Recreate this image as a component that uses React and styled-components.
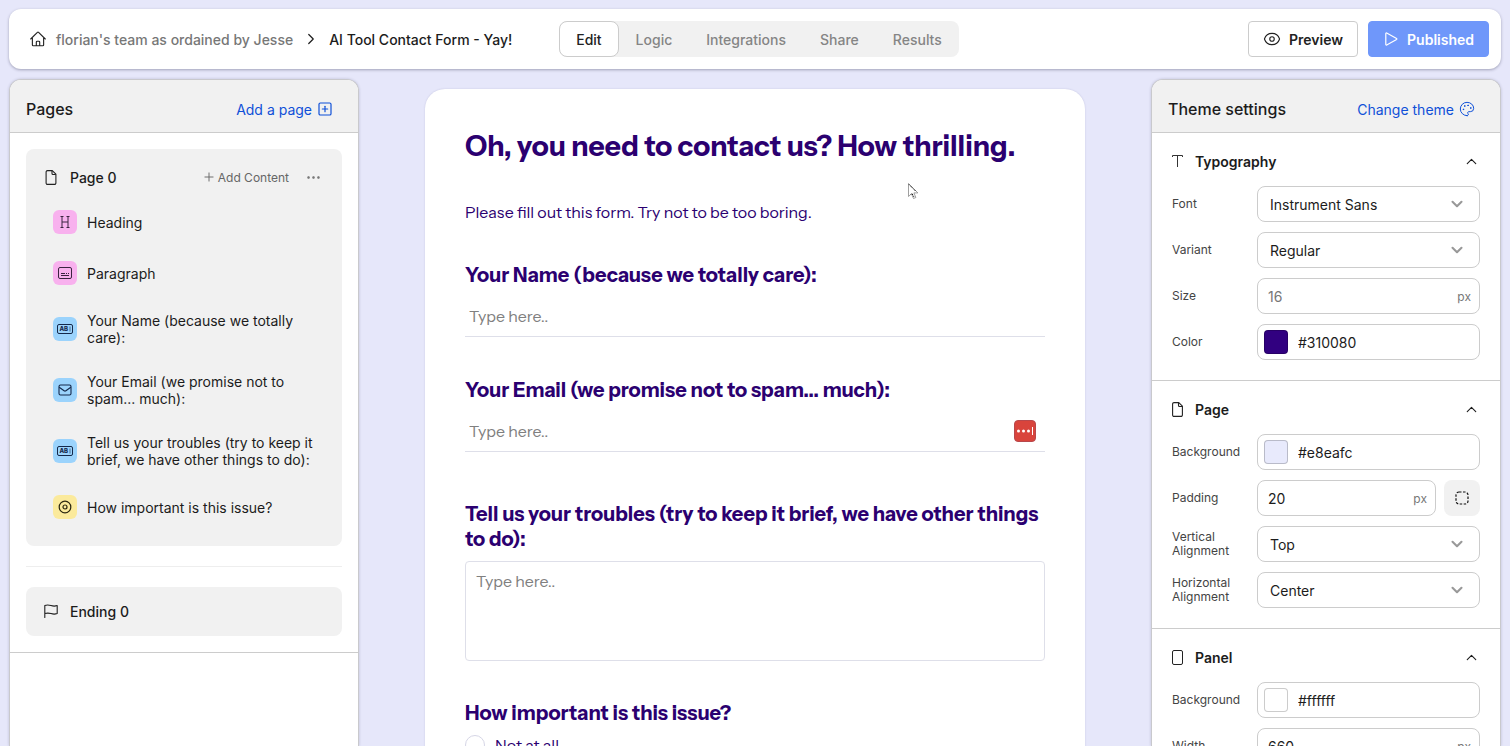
import React from "react";
import styled, { createGlobalStyle } from "styled-components";
import { HiOutlineHome, HiOutlineEye } from "react-icons/hi2";
import { ChevronUp, ChevronDown, ChevronRight, Palette, SquarePlus, Ellipsis, Plus } from "lucide-react";

const GlobalStyle = createGlobalStyle`
  *, *::before, *::after { box-sizing: border-box; }
  body {
    margin: 0;
    background: #e6e7fa;
    color: #1c1c1c;
    font-family: Inter, "Liberation Sans", sans-serif;
    font-size: 14px;
  }
  h1, h2, h3, p, ul { margin: 0; padding: 0; }
  button, input, select, textarea { font: inherit; color: inherit; margin: 0; }
  button { cursor: pointer; }
  svg { display: block; flex: none; }
`;

const Screen = styled.div`
  height: 100vh;
  padding: 9px 9px 0;
  display: flex;
  flex-direction: column;
  gap: 10px;
  overflow: hidden;
`;

/* Top bar */

const TopBar = styled.header`
  flex: none;
  display: grid;
  grid-template-columns: 1fr auto 1fr;
  align-items: center;
  padding: 12px 12px 12px 20px;
  background: #fff;
  border-radius: 12px;
  box-shadow: 0 1px 3px rgba(30, 30, 60, 0.35);
`;

const Breadcrumb = styled.nav`
  display: flex;
  align-items: center;
  gap: 9px;
  font-weight: 500;
  white-space: nowrap;
`;

const CrumbLink = styled.a`
  display: flex;
  align-items: center;
  gap: 9px;
  color: #777;
  text-decoration: none;
  svg { color: #222; }
`;

const Tabs = styled.nav`
  display: flex;
  background: #f1f1f1;
  border-radius: 8px;
`;

const Tab = styled.button`
  height: 36px;
  padding: 0 16px;
  border: 1px solid ${(p) => (p.$active ? "#ccc" : "transparent")};
  border-radius: 8px;
  background: ${(p) => (p.$active ? "#fff" : "transparent")};
  color: ${(p) => (p.$active ? "#222" : "#858585")};
  font-weight: 500;
`;

const Actions = styled.div`
  display: flex;
  justify-content: flex-end;
  gap: 10px;
`;

const ActionButton = styled.button`
  height: 36px;
  padding: 0 14px;
  display: flex;
  align-items: center;
  gap: 8px;
  border: 1px solid ${(p) => (p.$primary ? "#6f97fa" : "#ccc")};
  border-radius: 4px;
  background: ${(p) => (p.$primary ? "#6f97fa" : "#fff")};
  color: ${(p) => (p.$primary ? "#fff" : "#222")};
  font-weight: 600;
`;

/* Side panels */

const Workspace = styled.main`
  flex: 1;
  min-height: 0;
  display: grid;
  grid-template-columns: 350px minmax(0, 1fr) 350px;
`;

const SidePanel = styled.aside`
  min-height: 0;
  overflow: hidden;
  background: #fff;
  border: 1px solid #c9c9cd;
  border-bottom: 0;
  border-radius: 12px 12px 0 0;
  box-shadow: 0 0 3px rgba(30, 30, 60, 0.2);
`;

const PanelHeader = styled.div`
  height: 53px;
  padding: 6px 25px 0 16px;
  display: flex;
  align-items: center;
  justify-content: space-between;
  background: #f1f1f1;
  border-bottom: 1px solid #ccc;
`;

const PanelTitle = styled.h2`
  font-size: 16px;
  font-weight: 500;
`;

const LinkButton = styled.button`
  display: flex;
  align-items: center;
  gap: 5px;
  padding: 0;
  border: 0;
  background: none;
  color: #0f50d8;
  font-weight: 400;
`;

const PagesBody = styled.div`
  padding: 16px;
  border-bottom: 1px solid #ccc;
`;

const PageCard = styled.section`
  padding: 16px 20px 27px 18px;
  border-radius: 8px;
  background: #f1f1f1;
`;

const EndingCard = styled.section`
  padding: 12px 18px 13px;
  border-radius: 8px;
  background: #f1f1f1;
`;

const CardHead = styled.div`
  height: 24px;
  display: flex;
  align-items: center;
`;

const CardTitle = styled.h3`
  flex: 1;
  margin-left: 12px;
  font-size: 14px;
  font-weight: 500;
`;

const SmallButton = styled.button`
  display: flex;
  align-items: center;
  gap: 2px;
  margin-left: 16px;
  padding: 0;
  border: 0;
  background: none;
  color: #666;
  font-size: 12px;
`;

const ContentList = styled.ul`
  margin-top: 21px;
  padding-left: 9px;
  display: flex;
  flex-direction: column;
  gap: 27px;
  list-style: none;
`;

const ContentItem = styled.li`
  display: flex;
  align-items: center;
  gap: 10px;
  line-height: 17px;
`;

const Badge = styled.span`
  flex: none;
  width: 24px;
  height: 24px;
  display: grid;
  place-items: center;
  border-radius: 6px;
  background: ${(p) => p.$color};
`;

const Divider = styled.hr`
  margin: 20px 0;
  border: 0;
  border-top: 1px solid #eee;
`;

/* Form preview */

const Canvas = styled.div`
  min-height: 0;
  padding: 10px 10px 0;
  overflow: hidden;
`;

const FormCard = styled.form`
  max-width: 660px;
  min-height: 100%;
  margin: 0 auto;
  padding: 40px;
  border-radius: 20px;
  background: #fff;
  box-shadow: 0 0 2px rgba(60, 60, 120, 0.2);
  color: #2b0070;
  font-family: "Instrument Sans", Inter, sans-serif;
`;

const FormTitle = styled.h1`
  font-size: 28px;
  line-height: 34px;
  font-weight: 700;
`;

const FormText = styled.p`
  margin-top: 37px;
  font-size: 16px;
  line-height: 24px;
`;

const Field = styled.div`
  margin-top: ${(p) => p.$gap}px;
`;

const FieldLabel = styled.label`
  display: block;
  margin-bottom: 9px;
  font-size: 20px;
  line-height: 25px;
  font-weight: 700;
`;

const LineBox = styled.div`
  height: 40px;
  padding: 0 9px 2px 4px;
  display: flex;
  align-items: center;
  border-bottom: 1px solid #dedfe9;
`;

const LineInput = styled.input`
  flex: 1;
  min-width: 0;
  padding: 0;
  border: 0;
  outline: 0;
  background: none;
  font-size: 16px;
  &::placeholder { color: #808080; opacity: 1; }
`;

const TextArea = styled.textarea`
  display: block;
  width: 100%;
  height: 100px;
  padding: 7px 10px;
  border: 1px solid #dedfe9;
  border-radius: 4px;
  resize: none;
  font-size: 16px;
  line-height: 24px;
  &::placeholder { color: #808080; opacity: 1; }
`;

const Choices = styled.fieldset`
  margin: 40px 0 0;
  padding: 0;
  border: 0;
`;

const Legend = styled.legend`
  margin-bottom: 9px;
  padding: 0;
  font-size: 20px;
  line-height: 25px;
  font-weight: 700;
`;

const Choice = styled.label`
  display: flex;
  align-items: center;
  gap: 10px;
  font-size: 16px;
  line-height: 20px;
`;

const Radio = styled.input`
  appearance: none;
  width: 20px;
  height: 20px;
  border: 1px solid #d6d6e6;
  border-radius: 50%;
`;

/* Theme settings */

const Settings = styled.section`
  padding: 18px 20px 20px;
  border-bottom: 1px solid #ccc;
`;

const SettingsHead = styled.button`
  width: 100%;
  height: 20px;
  margin-bottom: 15px;
  padding: 0;
  display: flex;
  align-items: center;
  border: 0;
  background: none;
  text-align: left;
  font-weight: 600;
`;

const SettingsName = styled.span`
  flex: 1;
  margin-left: 12px;
`;

const Rows = styled.div`
  display: flex;
  flex-direction: column;
  gap: 10px;
`;

const Row = styled.div`
  display: grid;
  grid-template-columns: 75px minmax(0, 1fr);
  gap: 10px;
  align-items: center;
`;

const RowLabel = styled.label`
  color: #444;
  font-size: 12px;
  line-height: 14px;
`;

const Inline = styled.div`
  display: flex;
  gap: 8px;
`;

const Box = styled.div`
  flex: 1;
  min-width: 0;
  height: 36px;
  padding: 0 8px 0 ${(p) => (p.$swatch ? 6 : 10)}px;
  display: flex;
  align-items: center;
  gap: 10px;
  border: 1px solid #ccc;
  border-radius: 8px;
`;

const BoxInput = styled.input`
  flex: 1;
  width: 100%;
  min-width: 0;
  padding: 0;
  border: 0;
  outline: 0;
  background: none;
  &::placeholder { color: #777; opacity: 1; }
`;

const Unit = styled.span`
  color: #777;
  font-size: 12px;
`;

const Swatch = styled.span`
  flex: none;
  width: 24px;
  height: 24px;
  border: 1px solid rgba(0, 0, 0, 0.2);
  border-radius: 4px;
  background: ${(p) => p.$color};
`;

const SelectBox = styled.div`
  display: grid;
  align-items: center;
  svg {
    grid-area: 1 / 1;
    justify-self: end;
    margin-right: 14px;
    color: #999;
    pointer-events: none;
  }
`;

const Select = styled.select`
  grid-area: 1 / 1;
  width: 100%;
  height: 36px;
  padding: 0 36px 0 12px;
  appearance: none;
  border: 1px solid #ccc;
  border-radius: 8px;
  background: #fff;
`;

const SquareButton = styled.button`
  flex: none;
  width: 36px;
  height: 36px;
  padding: 0;
  display: grid;
  place-items: center;
  border: 0;
  border-radius: 8px;
  background: #f1f1f1;
`;

const Pointer = styled.svg`
  position: fixed;
  left: 907px;
  top: 182px;
  pointer-events: none;
`;

/* Drawings */

const PlayIcon = () => (
  <svg width="16" height="16" viewBox="0 0 16 16" fill="none" stroke="currentColor" strokeWidth="1.2" strokeLinejoin="round">
    <path d="M2.8 2.5v11a.6.6 0 0 0 .9.5l9.900-5.500a.6.6 0 0 0 0-1L3.700 2a.6.6 0 0 0-.9.5z" />
  </svg>
);

const FileIcon = ({ width = 11 }) => (
  <svg width={width} height="15" viewBox="0 0 11 15" fill="none" stroke="#222" strokeWidth="1.1" strokeLinejoin="round">
    <path d="M2 .6h4.800L10.400 4.200V13a1.400 1.400 0 0 1-1.400 1.400H2A1.400 1.400 0 0 1 .6 13V2A1.400 1.400 0 0 1 2 .6z" />
    <path d="M6.500.8v2.700a1 1 0 0 0 1 1h2.800" />
  </svg>
);

const FlagIcon = () => (
  <svg width="14" height="14" viewBox="0 0 14 14" fill="none" stroke="#222" strokeWidth="1.1" strokeLinecap="round" strokeLinejoin="round">
    <path d="M.8 13.400V1.600c2-.9 4-.7 6.200 0s4.200.7 6.200 0v8c-2 .7-4 .7-6.200 0s-4.200-.7-6.200 0" />
  </svg>
);

const HeadingIcon = () => (
  <svg width="16" height="16" viewBox="0 0 16 16" fill="none" stroke="#3a2440">
    <path d="M5 3v10M11 3v10M5 8h6M3.500 2.500h3M9.500 2.500h3M3.500 13.500h3M9.500 13.500h3" />
  </svg>
);

const ParagraphIcon = () => (
  <svg width="16" height="16" viewBox="0 0 16 16" fill="none" stroke="#3a2440">
    <rect x="1.500" y="2.500" width="13" height="11" rx="1.500" />
    <path d="M4 8.500h4M9 8.500h1M11 8.500h1M4 10.500h8" />
  </svg>
);

const ShortTextIcon = () => (
  <svg width="16" height="16" viewBox="0 0 16 16" fill="none" stroke="#14284a">
    <rect x=".5" y="3.500" width="15" height="9" rx="1.500" />
    <path d="M13 5.500v5" strokeWidth=".6" />
    <text x="2.500" y="10.200" fill="#14284a" stroke="none" fontSize="6" fontWeight="800" fontFamily="Inter, sans-serif">AB</text>
  </svg>
);

const MailIcon = () => (
  <svg width="14" height="14" viewBox="0 0 14 14" fill="none" stroke="#14284a" strokeWidth="1.1" strokeLinejoin="round">
    <rect x="1" y="2" width="12" height="10" rx="1.500" />
    <path d="M1.200 4.200l4.900 3.600a1.500 1.500 0 0 0 1.800 0l4.900-3.600" />
  </svg>
);

const ChoiceIcon = () => (
  <svg width="14" height="14" viewBox="0 0 14 14" fill="none" stroke="#2b2710" strokeWidth="1.2">
    <circle cx="7" cy="7" r="5.800" />
    <circle cx="7" cy="7" r="2" />
  </svg>
);

const TypeIcon = () => (
  <svg width="11" height="14" viewBox="0 0 11 14" fill="none" stroke="#333">
    <path d="M.5 3V1.500h10V3M5.500 1.500V13" />
  </svg>
);

const PanelIcon = () => (
  <svg width="11" height="15" viewBox="0 0 11 15" fill="none" stroke="#222">
    <rect x=".5" y=".5" width="10" height="14" rx="1.500" />
  </svg>
);

const DashedIcon = () => (
  <svg width="14" height="14" viewBox="0 0 14 14" fill="none" stroke="#111" strokeWidth="1.2">
    <rect x="1" y="1" width="12" height="12" rx="3" strokeDasharray="2.500 1.500" />
  </svg>
);

const PasswordIcon = () => (
  <svg width="22" height="22" viewBox="0 0 22 22">
    <rect x=".5" y=".5" width="21" height="21" rx="3.500" fill="#d9443c" stroke="#b7484c" />
    <g fill="#fff">
      <circle cx="4.500" cy="11" r="1.500" />
      <circle cx="9.500" cy="11" r="1.500" />
      <circle cx="14.500" cy="11" r="1.500" />
      <path d="M18 7h1v8h-1z" />
    </g>
  </svg>
);

/* Data and composition */

const tabs = ["Edit", "Logic", "Integrations", "Share", "Results"];

const contents = [
  ["Heading", "#f8b1ee", <HeadingIcon />],
  ["Paragraph", "#f8b1ee", <ParagraphIcon />],
  ["Your Name (because we totally care):", "#9bd3fc", <ShortTextIcon />],
  ["Your Email (we promise not to spam... much):", "#9bd3fc", <MailIcon />],
  ["Tell us your troubles (try to keep it brief, we have other things to do):", "#9bd3fc", <ShortTextIcon />],
  ["How important is this issue?", "#fbea9c", <ChoiceIcon />],
];

function SelectRow({ id, label, value }) {
  return (
    <Row>
      <RowLabel htmlFor={id}>{label}</RowLabel>
      <SelectBox>
        <Select id={id} defaultValue={value}>
          <option>{value}</option>
        </Select>
        <ChevronDown size={18} strokeWidth={2.8} />
      </SelectBox>
    </Row>
  );
}

function ColorRow({ id, label, value }) {
  return (
    <Row>
      <RowLabel htmlFor={id}>{label}</RowLabel>
      <Box $swatch>
        <Swatch $color={value} />
        <BoxInput id={id} defaultValue={value} />
      </Box>
    </Row>
  );
}

function SizeRow({ id, label, value, placeholder, children }) {
  return (
    <Row>
      <RowLabel htmlFor={id}>{label}</RowLabel>
      <Inline>
        <Box>
          <BoxInput id={id} defaultValue={value} placeholder={placeholder} />
          <Unit>px</Unit>
        </Box>
        {children}
      </Inline>
    </Row>
  );
}

function SettingsGroup({ icon, name, children }) {
  return (
    <Settings>
      <SettingsHead type="button" aria-expanded="true">
        {icon}
        <SettingsName>{name}</SettingsName>
        <ChevronUp size={17} strokeWidth={1.6} />
      </SettingsHead>
      <Rows>{children}</Rows>
    </Settings>
  );
}

export default function App() {
  return (
    <>
      <GlobalStyle />
      <Screen>
        <TopBar>
          <Breadcrumb aria-label="Breadcrumb">
            <CrumbLink href="#team">
              <HiOutlineHome size={18} />
              florian's team as ordained by Jesse
            </CrumbLink>
            <ChevronRight size={18} strokeWidth={1.6} />
            <span>AI Tool Contact Form - Yay!</span>
          </Breadcrumb>
          <Tabs aria-label="Form sections">
            {tabs.map((t, i) => (
              <Tab key={t} type="button" $active={i === 0}>{t}</Tab>
            ))}
          </Tabs>
          <Actions>
            <ActionButton type="button"><HiOutlineEye size={18} />Preview</ActionButton>
            <ActionButton type="button" $primary><PlayIcon />Published</ActionButton>
          </Actions>
        </TopBar>

        <Workspace>
          <SidePanel>
            <PanelHeader>
              <PanelTitle>Pages</PanelTitle>
              <LinkButton type="button">Add a page <SquarePlus size={16} strokeWidth={1.8} /></LinkButton>
            </PanelHeader>
            <PagesBody>
              <PageCard>
                <CardHead>
                  <FileIcon width={14} />
                  <CardTitle>Page 0</CardTitle>
                  <SmallButton type="button"><Plus size={14} strokeWidth={1.6} />Add Content</SmallButton>
                  <SmallButton type="button" aria-label="More"><Ellipsis size={17} strokeWidth={1.5} /></SmallButton>
                </CardHead>
                <ContentList>
                  {contents.map(([label, color, icon]) => (
                    <ContentItem key={label}>
                      <Badge $color={color}>{icon}</Badge>
                      <span>{label}</span>
                    </ContentItem>
                  ))}
                </ContentList>
              </PageCard>
              <Divider />
              <EndingCard>
                <CardHead>
                  <FlagIcon />
                  <CardTitle>Ending 0</CardTitle>
                </CardHead>
              </EndingCard>
            </PagesBody>
          </SidePanel>

          <Canvas>
            <FormCard>
              <FormTitle>Oh, you need to contact us? How thrilling.</FormTitle>
              <FormText>Please fill out this form. Try not to be too boring.</FormText>
              <Field $gap={39}>
                <FieldLabel htmlFor="name">Your Name (because we totally care):</FieldLabel>
                <LineBox><LineInput id="name" placeholder="Type here.." /></LineBox>
              </Field>
              <Field $gap={41}>
                <FieldLabel htmlFor="email">Your Email (we promise not to spam... much):</FieldLabel>
                <LineBox>
                  <LineInput id="email" type="email" placeholder="Type here.." />
                  <PasswordIcon />
                </LineBox>
              </Field>
              <Field $gap={50}>
                <FieldLabel htmlFor="troubles">
                  Tell us your troubles (try to keep it brief, we have other things to do):
                </FieldLabel>
                <TextArea id="troubles" placeholder="Type here.." />
              </Field>
              <Choices>
                <Legend>How important is this issue?</Legend>
                <Choice><Radio type="radio" name="importance" />Not at all</Choice>
              </Choices>
            </FormCard>
          </Canvas>

          <SidePanel>
            <PanelHeader>
              <PanelTitle>Theme settings</PanelTitle>
              <LinkButton type="button">Change theme <Palette size={16} strokeWidth={1.5} /></LinkButton>
            </PanelHeader>
            <SettingsGroup icon={<TypeIcon />} name="Typography">
              <SelectRow id="font" label="Font" value="Instrument Sans" />
              <SelectRow id="variant" label="Variant" value="Regular" />
              <SizeRow id="size" label="Size" placeholder="16" />
              <ColorRow id="color" label="Color" value="#310080" />
            </SettingsGroup>
            <SettingsGroup icon={<FileIcon />} name="Page">
              <ColorRow id="page-bg" label="Background" value="#e8eafc" />
              <SizeRow id="padding" label="Padding" value="20">
                <SquareButton type="button" aria-label="Edit each side"><DashedIcon /></SquareButton>
              </SizeRow>
              <SelectRow id="valign" label="Vertical Alignment" value="Top" />
              <SelectRow id="halign" label="Horizontal Alignment" value="Center" />
            </SettingsGroup>
            <SettingsGroup icon={<PanelIcon />} name="Panel">
              <ColorRow id="panel-bg" label="Background" value="#ffffff" />
              <SizeRow id="width" label="Width" value="660" />
            </SettingsGroup>
          </SidePanel>
        </Workspace>
      </Screen>
      <Pointer width="12" height="18" viewBox="0 0 12 18" aria-hidden="true">
        <path d="M1.500 1.500v13l3-2.800 2 4.800 2.400-1-2-4.600h4z" fill="#fff" stroke="#888" strokeWidth=".8" />
        <path d="M2 2.500l7 7M4 12.500l1-1 2 3.500" stroke="#111" strokeDasharray="1.200 .8" fill="none" />
      </Pointer>
    </>
  );
}
